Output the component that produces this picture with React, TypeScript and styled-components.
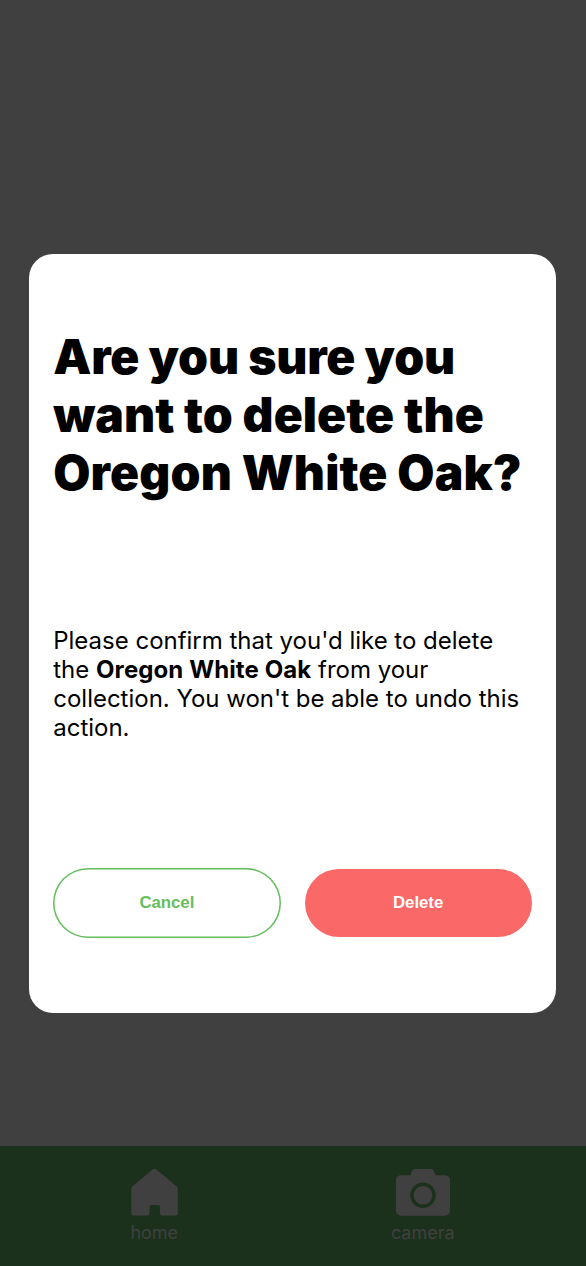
import React from "react";
import styled, { createGlobalStyle } from "styled-components";

const GlobalStyle = createGlobalStyle`
  *, *::before, *::after { box-sizing: border-box; }
  body { margin: 0; background: #404040; font-family: Inter, "Liberation Sans", sans-serif; }
`;

const Screen = styled.div`
  height: 1266px;
  display: flex;
  flex-direction: column;
  background: #404040;
`;

const Stage = styled.main`
  flex: 1;
  display: flex;
  justify-content: center;
  align-items: flex-end;
  padding: 0 1px 133.5px 0;
`;

const Dialog = styled.section`
  width: 526.5px;
  height: 759px;
  padding: 0 24px 74.5px;
  display: flex;
  flex-direction: column;
  background: #fff;
  border-radius: 24px;
  color: #000;
`;

const Title = styled.h1`
  margin: 74px 0 0;
  font-size: 48px;
  line-height: 58px;
  font-weight: 900;
  white-space: nowrap;
`;

const TitleLine = styled.span<{ $tracking: number }>`
  display: block;
  letter-spacing: ${(p) => p.$tracking}px;
`;

const Message = styled.p`
  margin: 124.2px 0 0;
  font-size: 24px;
  line-height: 29.2px;
  letter-spacing: -0.01px;
  white-space: nowrap;

  strong {
    letter-spacing: 0.1px;
  }
`;

const Actions = styled.div`
  margin-top: auto;
  display: grid;
  grid-template-columns: 1fr 1fr;
  align-items: center;
  gap: 24px;
`;

const ActionButton = styled.button<{ $danger?: boolean }>`
  height: ${(p) => (p.$danger ? "67.5px" : "70px")};
  padding: 0;
  border: 0;
  border-radius: 36px;
  box-shadow: ${(p) => (p.$danger ? "none" : "inset 0 0 0 1.5px #65be5d")};
  background: ${(p) => (p.$danger ? "#fa6868" : "#fff")};
  color: ${(p) => (p.$danger ? "#fff" : "#65be5d")};
  font: bold 16.75px "Liberation Sans", sans-serif;
`;

const TabBar = styled.nav`
  height: 120px;
  padding: 23px 9px 0 0;
  display: flex;
  justify-content: center;
  gap: 204.5px;
  background: #1c311b;
`;

const Tab = styled.a`
  width: 64px;
  display: flex;
  flex-direction: column;
  align-items: center;
  color: #404040;
  font-size: 18px;
  line-height: 22px;
`;

const Icon = styled.svg`
  display: block;
  margin-bottom: 6px;
  fill: currentColor;
`;

export default function App() {
  return (
    <>
      <GlobalStyle />
      <Screen>
        <Stage>
          <Dialog role="dialog">
            <Title>
              <TitleLine $tracking={-0.2}>Are you sure you</TitleLine>
              <TitleLine $tracking={0.08}>want to delete the</TitleLine>
              <TitleLine $tracking={0.15}>Oregon White Oak?</TitleLine>
            </Title>
            <Message>
              Please confirm that you'd like to delete
              <br />
              the <strong>Oregon White Oak</strong> from your
              <br />
              collection. You won't be able to undo this
              <br />
              action.
            </Message>
            <Actions>
              <ActionButton>Cancel</ActionButton>
              <ActionButton $danger>Delete</ActionButton>
            </Actions>
          </Dialog>
        </Stage>
        <TabBar>
          <Tab>
            <Icon width="47" height="47" viewBox="0 0 47 47">
              <path d="M21.3.8a3.2 3.2 0 0 1 4.4 0L45.7 17.600q1.100 1 1.100 2.600V44.500a2 2 0 0 1-2 2H31a2 2 0 0 1-2-2V38a2 2 0 0 0-2-2h-6.500a2 2 0 0 0-2 2v6.500a2 2 0 0 1-2 2H2.300a2 2 0 0 1-2-2V20.200q0-1.600 1.100-2.600z" />
            </Icon>
            home
          </Tab>
          <Tab>
            <Icon width="54" height="47" viewBox="0 0 54 47">
              <path
                fillRule="evenodd"
                d="M19 0H35q2 0 3 2l1.500 4.200H49a5 5 0 0 1 5 5V41.700a5 5 0 0 1-5 5H5a5 5 0 0 1-5-5V11.200a5 5 0 0 1 5-5h9.500L16 2q1-2 3-2zM27 13.500a12.800 12.800 0 1 0 0 25.600a12.800 12.800 0 1 0 0-25.600z"
              />
              <circle cx="27" cy="26.300" r="9.300" />
            </Icon>
            camera
          </Tab>
        </TabBar>
      </Screen>
    </>
  );
}
